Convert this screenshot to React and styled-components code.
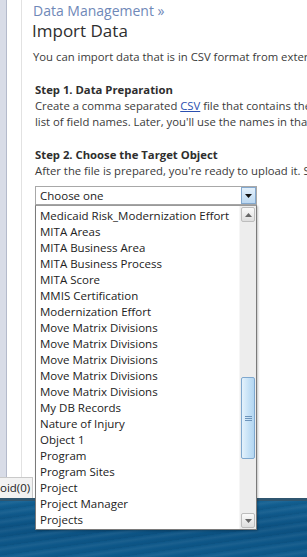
import styled, { createGlobalStyle } from "styled-components";

const GlobalStyle = createGlobalStyle`
  html, body {
    margin: 0;
    padding: 0;
    background: #fff;
  }
  body {
    font-family: "Open Sans", "Noto Sans", sans-serif;
  }
`;

const Screen = styled.div`
  width: 307px;
  height: 557px;
  display: flex;
  flex-direction: column;
  overflow: hidden;
  position: relative;
  background: #fff;
`;

const Window = styled.div`
  height: 498px;
  flex-shrink: 0;
  display: flex;
  position: relative;
  background: #fff;
`;

const SideFrame = styled.div`
  width: 6px;
  background: #d8dce7;
  border-right: 1px solid #b4bacb;
`;

const Gutter = styled.div`
  width: 14px;
  border-right: 1px solid #e2e2e2;
`;

const Content = styled.div`
  flex: 1;
  min-width: 0;
  padding-left: 11px;
  color: #333;
`;

const Breadcrumb = styled.div`
  margin-top: 2px;
  font-size: 14px;
  line-height: 18px;
  color: #6f88b8;
  white-space: nowrap;
`;

const Title = styled.h1`
  margin: 0;
  font-size: 17px;
  line-height: 22px;
  font-weight: 400;
  color: #2e2e2e;
  margin-left: -1px;
  white-space: nowrap;
`;

const Text = styled.p`
  margin: ${(p) => p.$top || 0}px 0 0;
  font-size: 11.3px;
  line-height: 16px;
  color: #3a3a3a;
  white-space: nowrap;
`;

const Step = styled.section`
  margin-left: 2px;
  margin-top: 17px;
`;

const StepTitle = styled.h4`
  margin: 0;
  font-size: 11.3px;
  line-height: 16px;
  font-weight: 700;
  color: #2e2e2e;
  white-space: nowrap;
`;

const Link = styled.a`
  color: #2b4fb0;
  text-decoration: underline;
`;

const SelectWrap = styled.div`
  position: relative;
  width: 222px;
  margin-top: 7px;
`;

const SelectBox = styled.div`
  height: 19px;
  box-sizing: border-box;
  border: 1px solid #a8a8a8;
  display: flex;
  align-items: center;
  padding-left: 4px;
  font-size: 11.5px;
  color: #222;
  background: #fff;
`;

const SelectLabel = styled.span`
  flex: 1;
`;

const ArrowButton = styled.div`
  width: 15px;
  height: 17px;
  box-sizing: border-box;
  border: 1px solid #84a9cf;
  background: linear-gradient(#e3f0fb, #bcd8f1);
  display: flex;
  align-items: center;
  justify-content: center;
`;

const Popup = styled.div`
  position: absolute;
  top: 19px;
  left: 0;
  width: 222px;
  box-sizing: border-box;
  border: 1px solid #7a7a7a;
  border-top-color: #9a9a9a;
  background: #fff;
  display: flex;
  z-index: 10;
  box-shadow: 1px 1px 2px rgba(0, 0, 0, 0.25);
`;

const Options = styled.ul`
  flex: 1;
  list-style: none;
  margin: 0;
  padding: 2px 0 1px;
`;

const Option = styled.li`
  height: 16px;
  line-height: 16px;
  padding-left: 4px;
  font-size: 11.5px;
  color: #222;
  white-space: nowrap;
`;

const Scrollbar = styled.div`
  width: 16px;
  background: #ededed;
  border-left: 1px solid #f6f6f6;
  display: flex;
  flex-direction: column;
  padding: 1px 0;
`;

const ScrollButton = styled.div`
  height: 15px;
  box-sizing: border-box;
  margin: 0 1px;
  border: 1px solid #bdbdbd;
  border-radius: 2px;
  background: linear-gradient(#fafafa, #dedede);
  display: flex;
  align-items: center;
  justify-content: center;
`;

const Track = styled.div`
  flex: 1;
  display: flex;
  flex-direction: column;
  padding: 0 1px;
`;

const Thumb = styled.div`
  margin-top: ${(p) => p.$offset}px;
  height: ${(p) => p.$size}px;
  box-sizing: border-box;
  border: 1px solid #7fa8cf;
  border-radius: 2px;
  background: linear-gradient(90deg, #e4f2fc, #c3e0f6 60%, #b3d6f1);
  display: flex;
  align-items: center;
  justify-content: center;
`;

const StatusTab = styled.div`
  position: absolute;
  left: 0;
  bottom: 0;
  width: 33px;
  height: 21px;
  box-sizing: border-box;
  border-top: 1px solid #c9c9c9;
  border-right: 1px solid #c9c9c9;
  background: #f2f2f2;
  font-size: 11.5px;
  line-height: 19px;
  color: #222;
  overflow: hidden;
  white-space: nowrap;
  z-index: 2;
`;

const Desktop = styled.div`
  flex: 1;
  border-top: 3px solid #2f5670;
  background:
    repeating-linear-gradient(
      172deg,
      rgba(255, 255, 255, 0) 0px,
      rgba(255, 255, 255, 0.06) 3px,
      rgba(255, 255, 255, 0) 6px,
      rgba(0, 0, 0, 0.05) 9px
    ),
    linear-gradient(#125f91, #0c5283 50%, #0e5a8c);
`;

const items = [
  "Medicaid Risk_Modernization Effort",
  "MITA Areas",
  "MITA Business Area",
  "MITA Business Process",
  "MITA Score",
  "MMIS Certification",
  "Modernization Effort",
  "Move Matrix Divisions",
  "Move Matrix Divisions",
  "Move Matrix Divisions",
  "Move Matrix Divisions",
  "Move Matrix Divisions",
  "My DB Records",
  "Nature of Injury",
  "Object 1",
  "Program",
  "Program Sites",
  "Project",
  "Project Manager",
  "Projects",
];

const Caret = ({ up, color = "#111" }) => (
  <svg width="7" height="4" viewBox="0 0 7 4">
    <path d={up ? "M0 4 L3.5 0 L7 4 Z" : "M0 0 L7 0 L3.5 4 Z"} fill={color} />
  </svg>
);

const Grip = () => (
  <svg width="7" height="5" viewBox="0 0 7 5">
    <path d="M0 0.5 H7 M0 2.5 H7 M0 4.5 H7" stroke="#6d94bb" strokeWidth="1" />
  </svg>
);

const App = () => {
  return (
    <Screen>
      <GlobalStyle />
      <Window>
        <SideFrame />
        <Gutter />
        <Content>
          <Breadcrumb>Data Management »</Breadcrumb>
          <Title>Import Data</Title>
          <Text $top={7}>
            You can import data that is in CSV format from external sources.
          </Text>
          <Step>
            <StepTitle>Step 1. Data Preparation</StepTitle>
            <Text>
              Create a comma separated <Link href="#">CSV</Link> file that contains the data. The first row must be a
            </Text>
            <Text>list of field names. Later, you'll use the names in that row to map the fields.</Text>
          </Step>
          <Step>
            <StepTitle>Step 2. Choose the Target Object</StepTitle>
            <Text>After the file is prepared, you're ready to upload it. Select the target object.</Text>
            <SelectWrap>
              <SelectBox>
                <SelectLabel>Choose one</SelectLabel>
                <ArrowButton>
                  <Caret />
                </ArrowButton>
              </SelectBox>
              <Popup>
                <Options>
                  {items.map((item, i) => (
                    <Option key={i}>{item}</Option>
                  ))}
                </Options>
                <Scrollbar>
                  <ScrollButton>
                    <Caret up color="#666" />
                  </ScrollButton>
                  <Track>
                    <Thumb $offset={155} $size={82}>
                      <Grip />
                    </Thumb>
                  </Track>
                  <ScrollButton>
                    <Caret color="#666" />
                  </ScrollButton>
                </Scrollbar>
              </Popup>
            </SelectWrap>
          </Step>
        </Content>
        <StatusTab>oid(0)</StatusTab>
      </Window>
      <Desktop />
    </Screen>
  );
};

export default App;
